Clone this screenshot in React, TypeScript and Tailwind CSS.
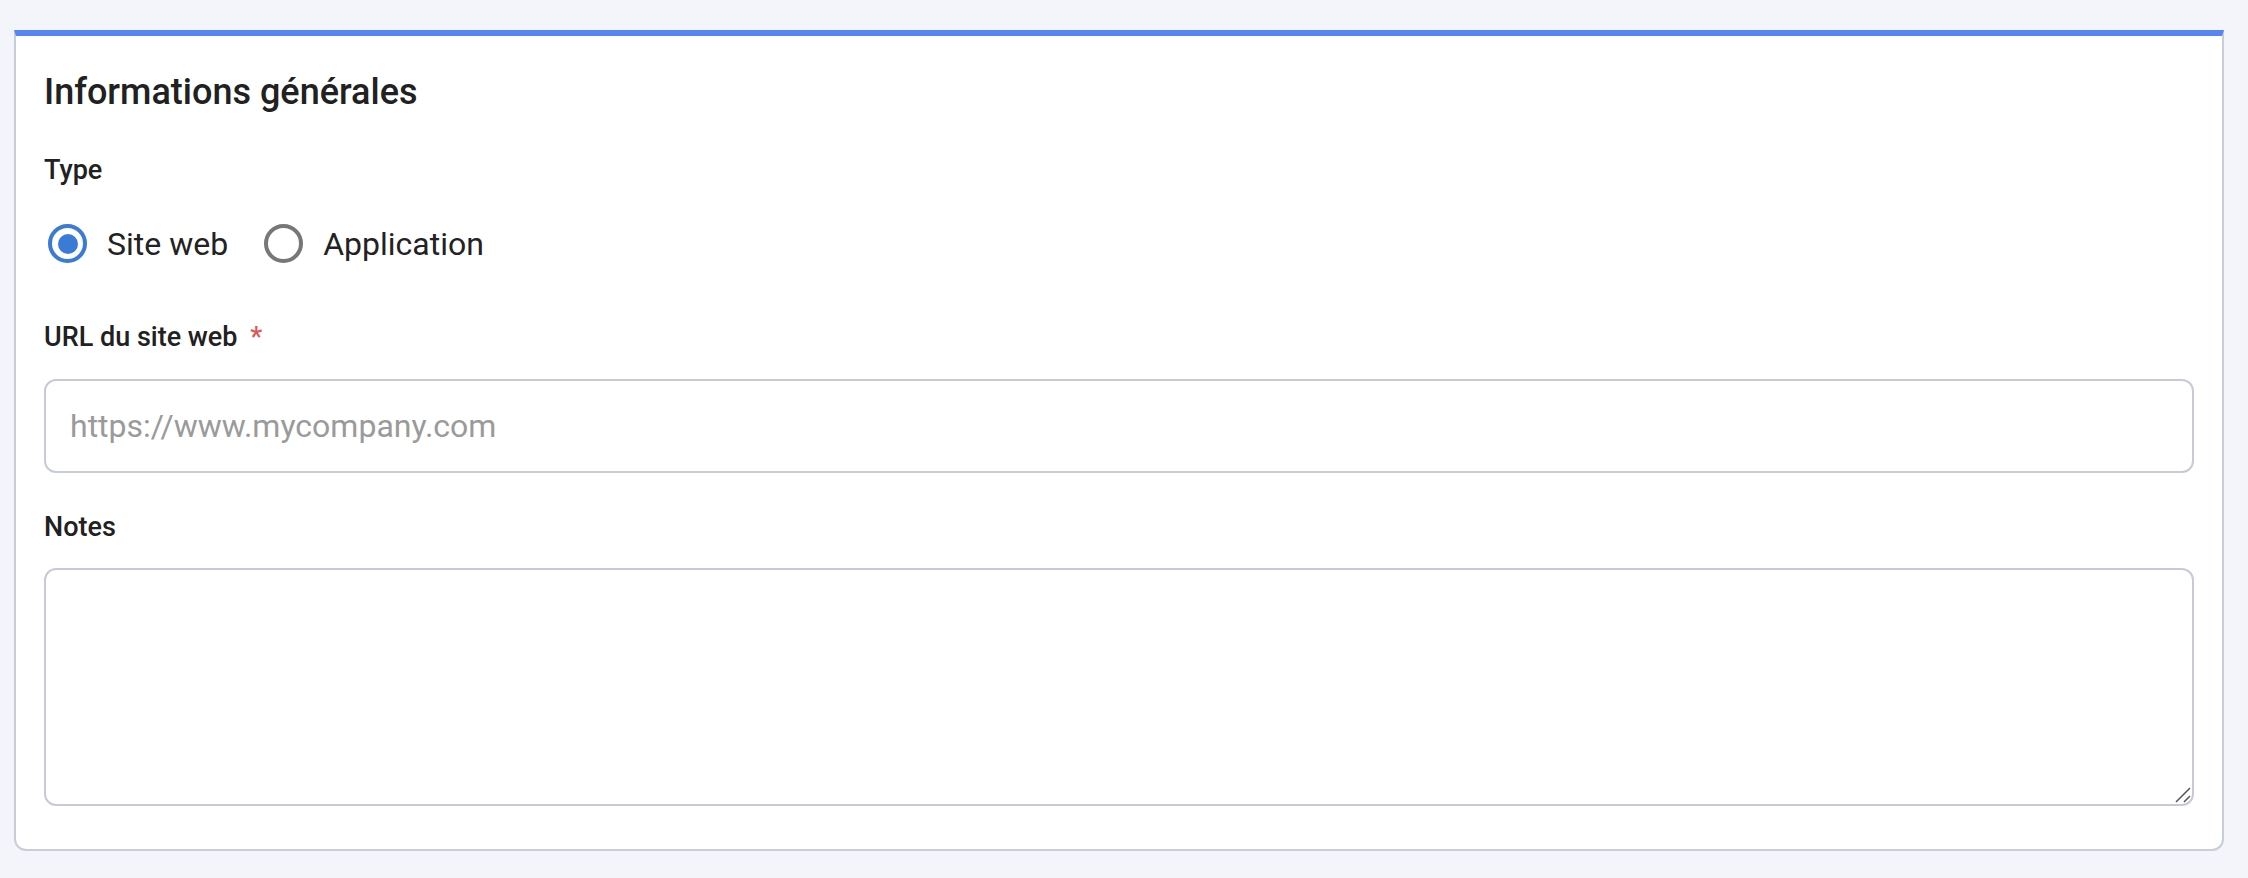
import React, { useState } from 'react';

type Kind = 'web' | 'app';

const Radio = ({ checked, label, onClick }: { checked: boolean; label: string; onClick: () => void }) => (
  <button type="button" onClick={onClick} className="flex items-center gap-[20px] text-left">
    <span
      className={`flex items-center justify-center w-[39px] h-[39px] rounded-full border-[4px] ${
        checked ? 'border-[#3a7bd5]' : 'border-[#777777]'
      }`}
    >
      {checked && <span className="w-[20px] h-[20px] rounded-full bg-[#3a7bd5]" />}
    </span>
    <span className="text-[32px] leading-[38px] text-[#222222]">{label}</span>
  </button>
);

export default function App() {
  const [kind, setKind] = useState<Kind>('web');

  return (
    <div className="min-h-[878px] bg-[#f4f5fa] pt-[30px] pl-[14px] pr-[24px] pb-[27px] font-[Roboto,sans-serif]">
      <div className="bg-white border-2 border-[#c9cdd8] border-t-[6px] border-t-[#5686f5] rounded-b-[12px] px-[28px] pt-[34px] pb-[43px]">
        <h2 className="text-[36px] leading-[44px] font-medium text-[#212121]">Informations générales</h2>

        <div className="mt-[41px] text-[27px] leading-[30px] font-medium text-[#212121]">Type</div>
        <div className="mt-[39px] h-[39px] flex items-center pl-[4px] gap-[36px]">
          <Radio checked={kind === 'web'} label="Site web" onClick={() => setKind('web')} />
          <Radio checked={kind === 'app'} label="Application" onClick={() => setKind('app')} />
        </div>

        <label className="block mt-[59px] text-[27px] leading-[30px] font-medium text-[#212121]">
          URL du site web <span className="text-[#e05555] ml-[6px]">*</span>
        </label>
        <input
          type="text"
          placeholder="https://www.mycompany.com"
          className="mt-[27px] block w-full h-[94px] border-2 border-[#c6cbd6] rounded-[12px] px-[24px] text-[32px] text-[#212121] placeholder:text-[#9a9a9a] outline-none"
        />

        <label className="block mt-[39px] text-[27px] leading-[30px] font-medium text-[#212121]">Notes</label>
        <div className="relative mt-[26px]">
          <textarea className="block w-full h-[238px] border-2 border-[#c6cbd6] rounded-[12px] px-[24px] py-[16px] text-[32px] resize-none outline-none" />
          <svg className="absolute right-[3px] bottom-[3px] w-[16px] h-[16px]" viewBox="0 0 16 16">
            <path d="M1 15 L15 1 M9 15 L15 9" stroke="#555555" strokeWidth="1.5" fill="none" />
          </svg>
        </div>
      </div>
    </div>
  );
}
